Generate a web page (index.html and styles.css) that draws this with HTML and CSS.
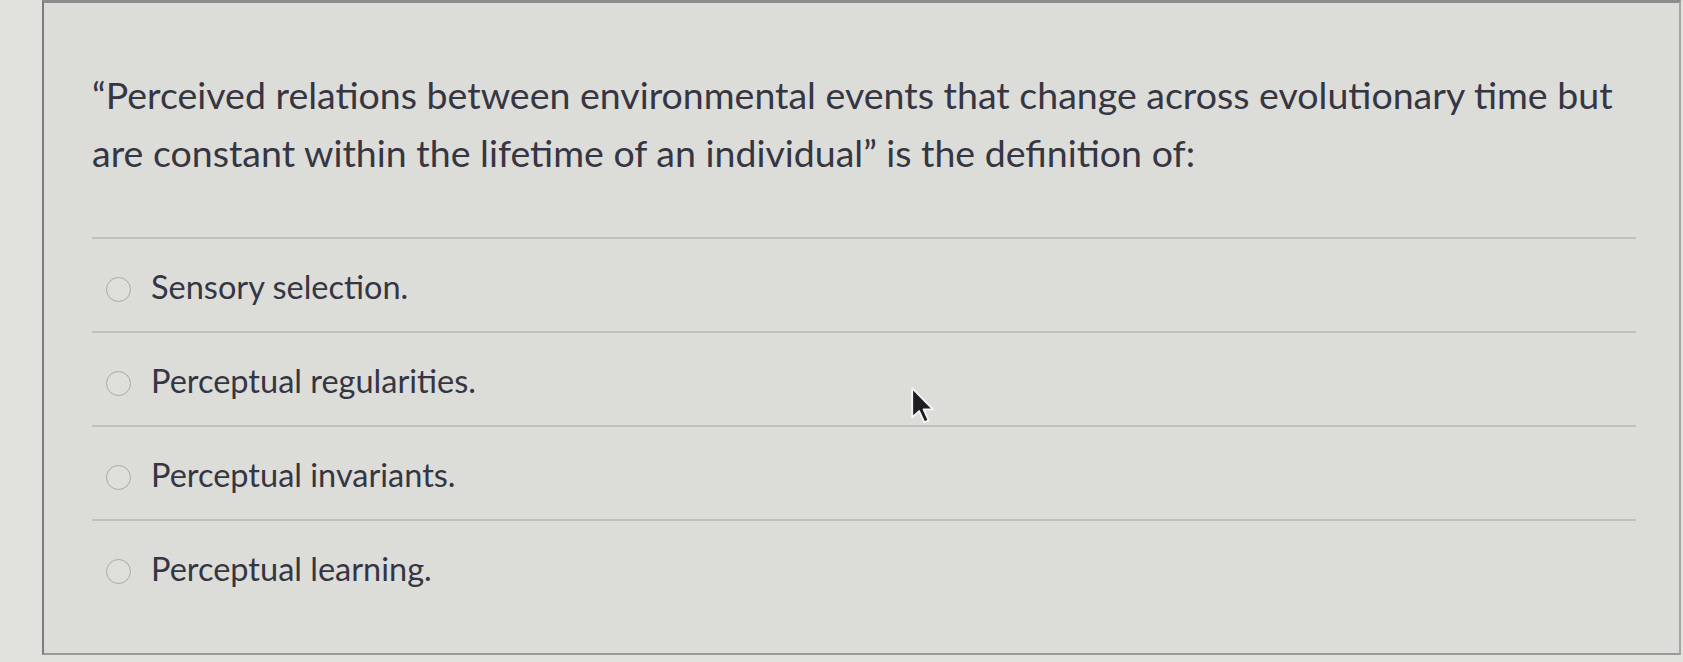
FILE: index.html
```html
<!DOCTYPE html>
<html lang="en">
<head>
<meta charset="utf-8">
<title>Quiz question</title>
<link rel="stylesheet" href="styles.css">
</head>
<body>
<div class="page">
  <div class="panel">
    <div class="question">“Perceived relations between environmental events that change across evolutionary time but are constant within the lifetime of an individual” is the definition of:</div>
    <div class="answers">
      <label class="answer"><span class="radio"></span><span class="text">Sensory selection.</span></label>
      <label class="answer"><span class="radio"></span><span class="text">Perceptual regularities.</span></label>
      <label class="answer"><span class="radio"></span><span class="text">Perceptual invariants.</span></label>
      <label class="answer"><span class="radio"></span><span class="text">Perceptual learning.</span></label>
    </div>
  </div>
  <svg class="cursor" width="26" height="39" viewBox="0 0 12 18" xmlns="http://www.w3.org/2000/svg">
    <path d="M1 1 L1 14.5 L4.2 11.6 L6.6 16.8 L8.6 15.9 L6.3 10.8 L10.6 10.8 Z" fill="#1e1e22" stroke="#f4f4f2" stroke-width="0.9" stroke-linejoin="round"/>
  </svg>
</div>
</body>
</html>
```

FILE: styles.css
```css
html, body {
  margin: 0;
  padding: 0;
}
body {
  background: #e1e1de;
  font-family: Lato, "Open Sans", sans-serif;
  color: #363642;
  width: 1683px;
  height: 662px;
  overflow: hidden;
}
.page {
  position: relative;
  padding-left: 42px;
  height: 662px;
  box-sizing: border-box;
}
.panel {
  width: 1639px;
  height: 655px;
  box-sizing: border-box;
  background: #dcdcd9;
  border-top: 3px solid #8b8b8c;
  border-left: 2px solid #7d7d7f;
  border-right: 2px solid #a6a6a4;
  border-bottom: 2px solid #9a9a99;
  padding: 63px 20px 0 48px;
}
.question {
  font-size: 37.5px;
  line-height: 58px;
  margin-bottom: 55px;
}
.answers {
  display: flex;
  flex-direction: column;
  width: 1544px;
}
.answer {
  display: flex;
  align-items: center;
  border-top: 2px solid #c0c0bd;
  padding: 29px 0 25px 14px;
  font-size: 32.5px;
  line-height: 38px;
}
.radio {
  width: 23px;
  height: 23px;
  border: 1.5px solid #aaaaa8;
  border-radius: 50%;
  background: #dededb;
  margin: 4px 20px 0 0;
  flex: none;
}
.cursor {
  position: absolute;
  left: 910px;
  top: 386px;
}
```
